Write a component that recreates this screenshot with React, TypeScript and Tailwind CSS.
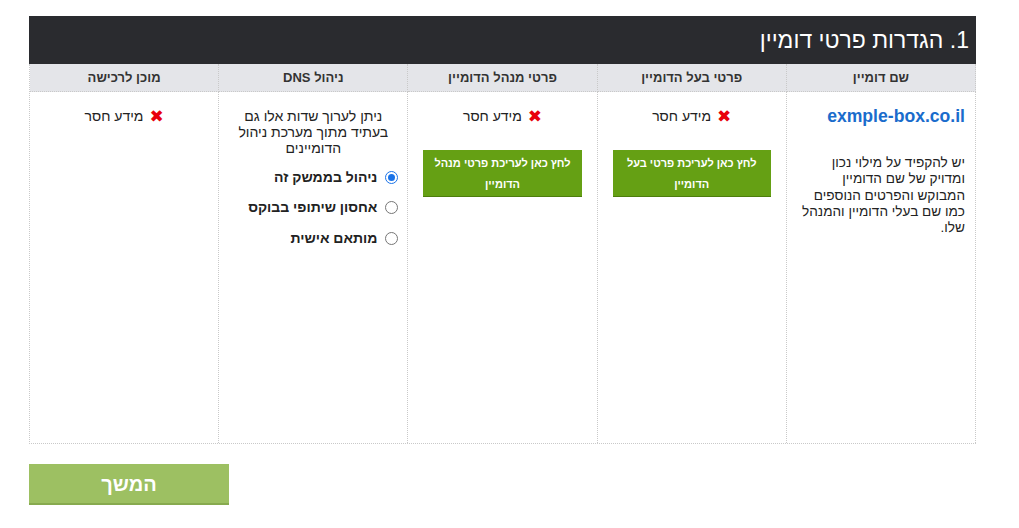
import React from "react";

const Missing = () => (
  <div className="flex items-center justify-center gap-[6px] text-[14px] text-[#222] h-[20px]">
    <span className="text-[#e8000b] text-[17px] font-bold leading-none" style={{ fontFamily: "'DejaVu Sans', sans-serif" }}>✖</span>
    <span>מידע חסר</span>
  </div>
);

const GreenBtn = ({ line1 }: { line1: string }) => (
  <div className="mx-[15px] mt-[24px] h-[47px] bg-[#65a014] border-b border-[#4d7d0c] text-white text-[11px] font-bold text-center pt-[3px]">
    <div className="h-[21px] leading-[21px]">{line1}</div>
    <div className="h-[21px] leading-[21px]">הדומיין</div>
  </div>
);

const Radio = ({ checked, label }: { checked?: boolean; label: string }) => (
  <div className="flex items-center gap-[8px] h-[20px]">
    <span
      className={
        checked
          ? "w-[13px] h-[13px] rounded-full border-[1.5px] border-[#1a73e8] flex items-center justify-center"
          : "w-[13px] h-[13px] rounded-full border border-[#767676] bg-white"
      }
    >
      {checked && <span className="w-[7px] h-[7px] rounded-full bg-[#1a73e8]" />}
    </span>
    <span className="font-bold text-[14px] text-[#222]">{label}</span>
  </div>
);

const Line = ({ children, h = 16 }: { children: React.ReactNode; h?: number }) => (
  <div className="h-[16px] leading-[16px] whitespace-nowrap" style={{ height: h, lineHeight: `${h}px` }}>
    {children}
  </div>
);

export default function App() {
  const border = "border-[#c9c9c9] border-dotted";
  return (
    <div dir="rtl" className="w-[1019px] h-[528px] bg-white" style={{ fontFamily: "'Liberation Sans', Arial, sans-serif" }}>
      <div className="pt-[16px] mr-[43px] w-[947px]">
        <div className="h-[48px] bg-[#2a2b2f] text-white text-[23px] flex items-center pr-[7px]">
          1. הגדרות פרטי דומיין
        </div>
        <div className={`grid grid-cols-5 border-l border-b ${border}`}>
          {["שם דומיין", "פרטי בעל הדומיין", "פרטי מנהל הדומיין", "ניהול DNS", "מוכן לרכישה"].map((h) => (
            <div key={h} className={`h-[28px] bg-[#e4e5e9] border-r border-b ${border} flex items-center justify-center text-[13px] font-bold text-[#333]`}>
              {h}
            </div>
          ))}
          <div className={`h-[351px] border-r ${border} pr-[10px] pt-[13px]`}>
            <div className="text-[#1a6ccc] font-bold text-[17.6px] leading-[22px]">exmple-box.co.il</div>
            <div className="mt-[28px] text-[13.6px] text-[#222]">
              <Line h={16.3}>יש להקפיד על מילוי נכון</Line>
              <Line h={16.3}>ומדויק של שם הדומיין</Line>
              <Line h={16.3}>המבוקש והפרטים הנוספים</Line>
              <Line h={16.3}>כמו שם בעלי הדומיין והמנהל</Line>
              <Line h={16.3}>שלו.</Line>
            </div>
          </div>
          <div className={`border-r ${border} pt-[14px]`}>
            <Missing />
            <GreenBtn line1="לחץ כאן לעריכת פרטי בעל" />
          </div>
          <div className={`border-r ${border} pt-[14px]`}>
            <Missing />
            <GreenBtn line1="לחץ כאן לעריכת פרטי מנהל" />
          </div>
          <div className={`border-r ${border} pt-[16px]`}>
            <div className="text-center text-[14px] text-[#222] flex flex-col items-center">
              <Line>ניתן לערוך שדות אלו גם</Line>
              <Line>בעתיד מתוך מערכת ניהול</Line>
              <Line>הדומיינים</Line>
            </div>
            <div className="pr-[9px] mt-[11px] flex flex-col gap-[10.5px]">
              <Radio checked label="ניהול בממשק זה" />
              <Radio label="אחסון שיתופי בבוקס" />
              <Radio label="מותאם אישית" />
            </div>
          </div>
          <div className={`border-r ${border} pt-[14px]`}>
            <Missing />
          </div>
        </div>
      </div>
      <div className="mr-[790px] mt-[20px] w-[200px] h-[41px] bg-[#9dc062] border-b-2 border-[#87aa4f] flex items-center justify-center text-white text-[20px] font-bold">
        המשך
      </div>
    </div>
  );
}
